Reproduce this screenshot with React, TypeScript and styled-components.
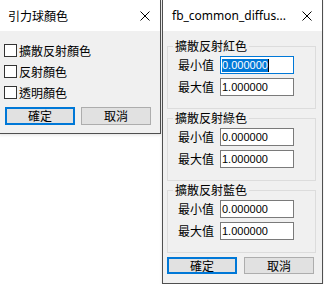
import React from "react";
import styled, { createGlobalStyle } from "styled-components";

const GlobalStyle = createGlobalStyle`
  html, body {
    margin: 0;
    background: #ffffff;
    overflow: hidden;
  }
  body {
    font-family: "Noto Sans CJK TC", "Noto Sans", sans-serif;
    font-size: 12px;
    color: #000000;
  }
`;

const cjk = `"Noto Sans CJK TC", "Noto Sans CJK SC", sans-serif`;

const Desktop = styled.div`
  display: flex;
  align-items: flex-start;
  gap: 1px;
  margin: -1px 0 0 -1px;
`;

const Window = styled.div<{ $w: number; $h: number }>`
  box-sizing: border-box;
  width: ${(p) => p.$w}px;
  height: ${(p) => p.$h}px;
  border: 1px solid #4f4f4f;
  background: #f0f0f0;
  display: flex;
  flex-direction: column;
  box-shadow: 0 1px 3px rgba(0, 0, 0, 0.12);
`;

const TitleBar = styled.div`
  height: 31px;
  flex: none;
  background: #ffffff;
  display: flex;
  align-items: center;
  justify-content: space-between;
  padding: 0 10px 0 8px;
`;

const Title = styled.span<{ $latin?: boolean }>`
  font-family: ${(p) => (p.$latin ? `"Noto Sans", "Open Sans", sans-serif` : cjk)};
  font-size: 12px;
  line-height: 16px;
  white-space: nowrap;
  padding-left: ${(p) => (p.$latin ? 1 : 0)}px;
`;

const CloseIcon = () => (
  <svg width="10" height="10" viewBox="0 0 10 10">
    <path d="M0.5 0.5 L9.5 9.5 M9.5 0.5 L0.5 9.5" stroke="#000" strokeWidth="1" fill="none" />
  </svg>
);

const Body = styled.div<{ $pad: string }>`
  flex: 1;
  display: flex;
  flex-direction: column;
  padding: ${(p) => p.$pad};
`;

const CheckRow = styled.label`
  height: 21px;
  display: flex;
  align-items: center;
  gap: 2px;
  font-family: ${cjk};
  font-size: 12px;
  line-height: 14px;
`;

const CheckBox = styled.span`
  box-sizing: border-box;
  width: 13px;
  height: 13px;
  border: 1px solid #333333;
  background: #ffffff;
  flex: none;
`;

const ButtonRow = styled.div<{ $gap: number; $top: number; $left: number }>`
  display: flex;
  gap: ${(p) => p.$gap}px;
  margin-top: ${(p) => p.$top}px;
  padding-left: ${(p) => p.$left}px;
`;

const Button = styled.button<{ $primary?: boolean; $h: number }>`
  box-sizing: border-box;
  width: 70px;
  height: ${(p) => p.$h}px;
  margin: 0;
  padding: 0;
  background: #e1e1e1;
  border: ${(p) => (p.$primary ? "2px solid #0078d7" : "1px solid #adadad")};
  font-family: ${cjk};
  font-size: 12px;
  line-height: 14px;
  color: #000000;
  display: flex;
  align-items: center;
  justify-content: center;
`;

const Groups = styled.div`
  display: flex;
  flex-direction: column;
  gap: 2px;
  width: 149px;
`;

const Group = styled.fieldset`
  box-sizing: border-box;
  height: 70px;
  margin: 0;
  padding: 3px 0 0 0;
  min-inline-size: 0;
  border: 1px solid #dcdcdc;
  display: flex;
  flex-direction: column;
  gap: 4px;
`;

const Legend = styled.legend`
  font-family: ${cjk};
  font-size: 12px;
  line-height: 14px;
  padding: 0 2px;
  margin-left: 5px;
`;

const FieldRow = styled.div`
  display: flex;
  align-items: center;
  gap: 6px;
  padding-left: 10px;
`;

const FieldLabel = styled.span`
  width: 36px;
  font-family: ${cjk};
  font-size: 12px;
  line-height: 14px;
  white-space: nowrap;
`;

const Field = styled.div<{ $focused?: boolean }>`
  box-sizing: border-box;
  width: 74px;
  height: 18px;
  background: #ffffff;
  border: 1px solid ${(p) => (p.$focused ? "#0078d7" : "#7a7a7a")};
  padding-left: 1px;
  display: flex;
  align-items: center;
  font-family: "Liberation Sans", Arial, sans-serif;
  font-size: 11px;
  line-height: 12px;
`;

const Selected = styled.span`
  background: #0078d7;
  color: #ffffff;
  padding: 0 0 1px 0;
  border-right: 1px solid #000000;
`;

type Range = { title: string; min: string; max: string; focused?: boolean };

const ranges: Range[] = [
  { title: "擴散反射紅色", min: "0.000000", max: "1.000000", focused: true },
  { title: "擴散反射綠色", min: "0.000000", max: "1.000000" },
  { title: "擴散反射藍色", min: "0.000000", max: "1.000000" },
];

function ColorRangeGroup({ title, min, max, focused }: Range) {
  return (
    <Group>
      <Legend>{title}</Legend>
      <FieldRow>
        <FieldLabel>最小值</FieldLabel>
        <Field $focused={focused}>{focused ? <Selected>{min}</Selected> : min}</Field>
      </FieldRow>
      <FieldRow>
        <FieldLabel>最大值</FieldLabel>
        <Field>{max}</Field>
      </FieldRow>
    </Group>
  );
}

export default function App() {
  return (
    <>
      <GlobalStyle />
      <Desktop>
        <Window $w={162} $h={135}>
          <TitleBar>
            <Title>引力球顏色</Title>
            <CloseIcon />
          </TitleBar>
          <Body $pad="9px 0 8px 4px">
            <CheckRow>
              <CheckBox />
              擴散反射顏色
            </CheckRow>
            <CheckRow>
              <CheckBox />
              反射顏色
            </CheckRow>
            <CheckRow>
              <CheckBox />
              透明顏色
            </CheckRow>
            <ButtonRow $gap={6} $top={4} $left={1}>
              <Button $primary $h={18}>確定</Button>
              <Button $h={18}>取消</Button>
            </ButtonRow>
          </Body>
        </Window>
        <Window $w={161} $h={285}>
          <TitleBar>
            <Title $latin>fb_common_diffus...</Title>
            <CloseIcon />
          </TitleBar>
          <Body $pad="8px 0 9px 4px">
            <Groups>
              {ranges.map((r) => (
                <ColorRangeGroup key={r.title} {...r} />
              ))}
            </Groups>
            <ButtonRow $gap={7} $top={4} $left={0}>
              <Button $primary $h={17}>確定</Button>
              <Button $h={17}>取消</Button>
            </ButtonRow>
          </Body>
        </Window>
      </Desktop>
    </>
  );
}
